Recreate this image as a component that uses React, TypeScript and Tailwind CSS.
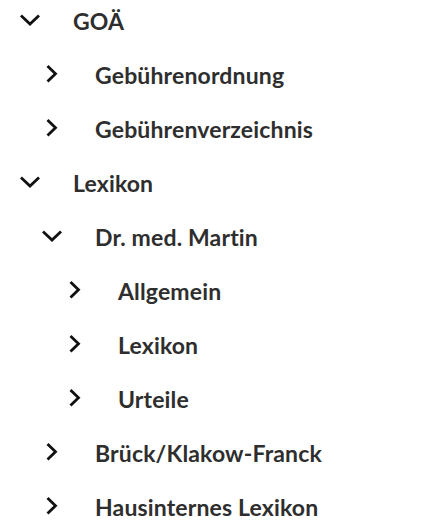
import React from 'react'

type Node = { label: string; level: number; open: boolean }

const items: Node[] = [
    { label: 'GOÄ', level: 0, open: true },
    { label: 'Gebührenordnung', level: 1, open: false },
    { label: 'Gebührenverzeichnis', level: 1, open: false },
    { label: 'Lexikon', level: 0, open: true },
    { label: 'Dr. med. Martin', level: 1, open: true },
    { label: 'Allgemein', level: 2, open: false },
    { label: 'Lexikon', level: 2, open: false },
    { label: 'Urteile', level: 2, open: false },
    { label: 'Brück/Klakow-Franck', level: 1, open: false },
    { label: 'Hausinternes Lexikon', level: 1, open: false },
]

const indent = ['pl-[14px]', 'pl-[36px]', 'pl-[59px]']

const ChevronDown = () => (
    <svg width="20" height="12" viewBox="0 0 20 12" fill="none">
        <path d="M2 2.5 L10 10 L18 2.5" stroke="#111" strokeWidth="2.8" strokeLinecap="square" />
    </svg>
)

const ChevronRight = () => (
    <svg width="12" height="18" viewBox="0 0 12 18" fill="none">
        <path d="M2.5 2 L9.5 8.8 L2.5 15.6" stroke="#111" strokeWidth="2.8" strokeLinecap="square" />
    </svg>
)

const App = () => {
    return (
        <div className="bg-white w-[435px] h-[530px] overflow-hidden" style={{ fontFamily: 'Lato, sans-serif' }}>
            <ul className="-mt-[6px]">
                {items.map((item, i) => (
                    <li key={i} className={`flex items-center h-[54px] ${indent[item.level]}`}>
                        <span className="w-8 flex justify-center -mt-[3px]">
                            {item.open ? <ChevronDown /> : <ChevronRight />}
                        </span>
                        <span className="ml-[27px] text-[23px] font-bold tracking-[0.15px] text-[#2e2e2e]">{item.label}</span>
                    </li>
                ))}
            </ul>
        </div>
    )
}

export default App
